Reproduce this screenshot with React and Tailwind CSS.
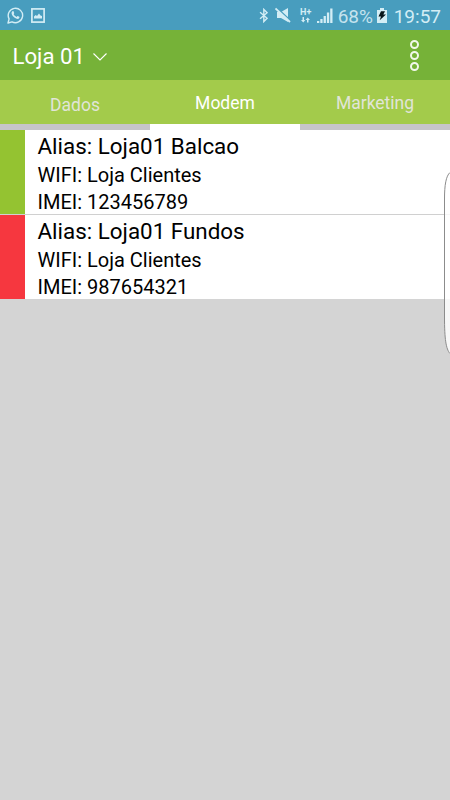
import React, { useState } from 'react';

const modems = [
  { id: 1, alias: 'Loja01 Balcao', wifi: 'Loja Clientes', imei: '123456789', online: true },
  { id: 2, alias: 'Loja01 Fundos', wifi: 'Loja Clientes', imei: '987654321', online: false },
];

const tabs = ['Dados', 'Modem', 'Marketing'];

const StatusBar = () => (
  <div className="flex h-[30px] items-center justify-between bg-[#489dbe] pl-[7px] pr-[9px] text-[#d3edf5]">
    <div className="flex items-center gap-[7px]">
      <svg className="h-[17px] w-[17px]" viewBox="0 0 17 17" fill="none">
        <path d="M1 16l1.100-4.100A7.200 7.200 0 1 1 5 14.800L1 16z" stroke="currentColor" strokeWidth="1.400" strokeLinejoin="round" />
        <path d="M5.300 4.400c.5-.5 1.100-.3 1.300.1l.6 1.400c.1.4-.5.9-.6 1.200.6 1.300 1.600 2.200 3 2.800.4-.2.8-1 1.200-.9l1.500.8c.6.5-.2 1.700-.8 2-1.300.5-3.200-.3-4.700-1.700-1.600-1.500-2.500-3.500-2.200-4.600.1-.5.4-.9.7-1.100z" fill="currentColor" />
      </svg>
      <svg className="h-[15px] w-[14px]" viewBox="0 0 14 15" fill="none">
        <rect x="0.9" y="0.9" width="12.200" height="13.200" stroke="currentColor" strokeWidth="1.700" />
        <path d="M3 10.500V8.500l1.700-1.500 1.300 1 2-2.500 1.500 2 1.500.5v2.500H3z" fill="currentColor" />
      </svg>
    </div>
    <div className="flex items-center">
      <svg className="mt-px h-[15px] w-[10px]" viewBox="0 0 10 16" fill="none" stroke="currentColor" strokeWidth="1.500">
        <path d="M.8 4.500l7.500 6.500L4.800 14.500v-13L8.300 5 .8 11.500" />
      </svg>
      <svg className="ml-[6px] h-4 w-4" viewBox="0 0 16 16">
        <path d="M2 5h4l7-4v14L6 11H2z" fill="currentColor" />
        <path d="M1.500 0.500L16 14" stroke="#489dbe" strokeWidth="1.500" />
        <path d="M.5 1.500L15 15" stroke="currentColor" strokeWidth="1.800" />
      </svg>
      <div className="ml-[9px] flex w-[12px] flex-col items-center gap-px">
        <span className="text-[9px] leading-[8px] font-bold">H+</span>
        <svg className="h-[6px] w-[9px]" viewBox="0 0 9 6" fill="currentColor">
          <path d="M1.500 0h1.500v3h1.300L2.250 5.500 0 3h1.500zM6 5.500h1.500V3H9L6.750.500 4.500 3H6z" />
        </svg>
      </div>
      <svg className="ml-[5px] mt-px h-4 w-4" viewBox="0 0 16 16" fill="currentColor">
        <path d="M0 13h2.300v2H0zM3.300 11h2.300v4H3.300zM6.600 8h2.300v7H6.600zM9.900 4.500h2.300V15H9.900zM13.200.500h2.300V15h-2.300z" />
      </svg>
      <span className="ml-[5px] w-[36px] pt-[3px] text-[19px] leading-[30px] whitespace-nowrap text-[#c5e3ee]">68%</span>
      <svg className="ml-[3px] mt-px h-[15px] w-[10px]" viewBox="0 0 10 16" preserveAspectRatio="none">
        <path d="M3 0h4v2h3v14H0V2h3z" fill="currentColor" />
        <path d="M4 3.500h4L6.300 7H9l-6.300 6L4 9H1.500z" fill="#08151a" />
      </svg>
      <span className="ml-[7px] pt-[3px] text-[19px] leading-[30px]">19:57</span>
    </div>
  </div>
);

const Header = () => (
  <header className="flex h-[50px] items-center justify-between bg-[#76b238] pl-[12.500px] pr-[31px] text-white">
    <button className="flex items-center gap-[8px]">
      <span className="pt-[2px] text-[22.200px] leading-[50px]">Loja 01</span>
      <svg className="mt-[3px] h-2 w-[14px]" viewBox="0 0 14 8" fill="none" stroke="currentColor" strokeWidth="1.100">
        <path d="M.5.500L7 7 13.500.500" />
      </svg>
    </button>
    <button className="flex flex-col gap-[2px]">
      <span className="size-[9px] rounded-full border-2 border-white/90" />
      <span className="size-[9px] rounded-full border-2 border-white/90" />
      <span className="size-[9px] rounded-full border-2 border-white/90" />
    </button>
  </header>
);

const ModemRow = ({ modem }) => (
  <li className="flex bg-white">
    <div className={`h-[84px] w-[25px] ${modem.online ? 'bg-[#94c331]' : 'bg-[#f6373f]'}`} />
    <div className="h-[84px] pl-[12.500px] pt-[2px] text-black">
      <p className="text-[22.400px] leading-[29px]">Alias: {modem.alias}</p>
      <p className="pt-px text-[20px] leading-[27px]">WIFI: {modem.wifi}</p>
      <p className="text-[20px] leading-[27px]">IMEI: {modem.imei}</p>
    </div>
  </li>
);

const App = () => {
  const [activeTab, setActiveTab] = useState('Modem');

  return (
    <div className="relative h-[800px] w-[450px] overflow-hidden bg-[#d4d4d4] font-[Roboto,sans-serif]">
      <StatusBar />
      <Header />
      <nav className="grid h-[50px] grid-cols-3 bg-[#a3cb4b]">
        {tabs.map((tab) => (
          <button
            key={tab}
            onClick={() => setActiveTab(tab)}
            className={`border-b-[6px] text-[17.500px] ${
              activeTab === tab ? 'border-white text-white' : 'border-[#c6c5ca] text-[#e1e5d8]'
            } ${tab === 'Dados' ? 'pt-[6px]' : 'pt-[2px]'}`}
          >
            {tab}
          </button>
        ))}
      </nav>
      <ul className="divide-y divide-[#d0d0d0]">
        {modems.map((modem) => (
          <ModemRow key={modem.id} modem={modem} />
        ))}
      </ul>

      {/* edge panel handle */}
      <svg className="absolute top-[171px] right-0 h-[184px] w-[7px]" viewBox="0 0 7 184">
        <path d="M7 1.500C3 5 1.500 14 1.500 28V146C1.500 168 3 178 7 182.500z" fill="#fff" fillOpacity="0.8" />
        <path d="M7 1.500C3 5 1.500 14 1.500 28V146C1.500 168 3 178 7 182.500" fill="none" stroke="#8c8c8c" strokeWidth="1" />
      </svg>
    </div>
  );
};

export default App;
